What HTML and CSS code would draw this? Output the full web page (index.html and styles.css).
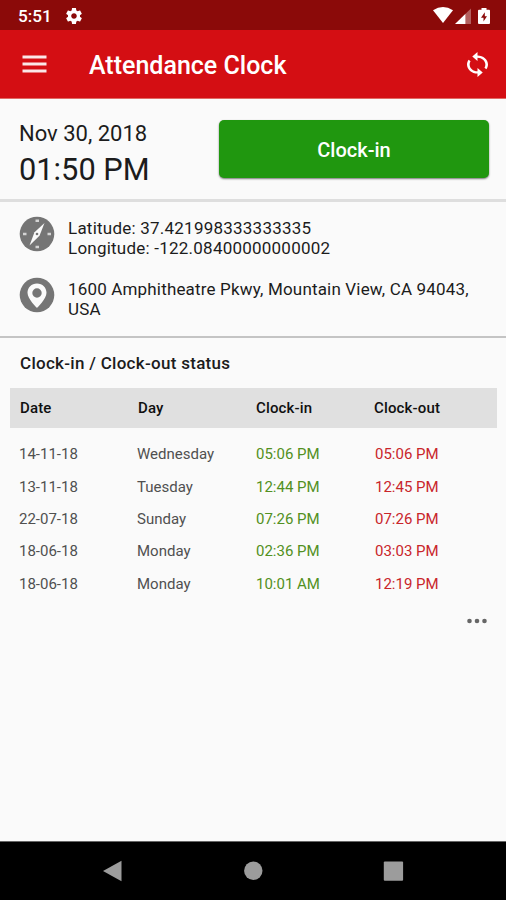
FILE: index.html
```html
<!DOCTYPE html>
<html lang="en">
<head>
<meta charset="utf-8">
<title>Attendance Clock</title>
<link rel="stylesheet" href="styles.css">
</head>
<body>
<div class="status-bar">
  <span class="status-time">5:51</span>
  <svg class="gear" viewBox="2 2 20 20"><path fill="#fff" fill-rule="evenodd" d="M19.43 12.98c.04-.32.07-.64.07-.98s-.03-.66-.07-.98l2.11-1.65c.19-.15.24-.42.12-.64l-2-3.46c-.12-.22-.39-.3-.61-.22l-2.49 1c-.52-.4-1.08-.73-1.69-.98l-.38-2.65C14.46 2.18 14.25 2 14 2h-4c-.25 0-.46.18-.49.42l-.38 2.65c-.61.25-1.17.59-1.69.98l-2.49-1c-.23-.09-.49 0-.61.22l-2 3.46c-.13.22-.07.49.12.64l2.11 1.65c-.04.32-.07.65-.07.98s.03.66.07.98l-2.11 1.65c-.19.15-.24.42-.12.64l2 3.46c.12.22.39.3.61.22l2.49-1c.52.4 1.08.73 1.69.98l.38 2.65c.03.24.24.42.49.42h4c.25 0 .46-.18.49-.42l.38-2.65c.61-.25 1.17-.59 1.69-.98l2.49 1c.23.09.49 0 .61-.22l2-3.46c.12-.22.07-.49-.12-.64l-2.11-1.65zM12 15.5c-1.93 0-3.5-1.57-3.5-3.5s1.57-3.5 3.5-3.5 3.5 1.57 3.5 3.5-1.57 3.5-3.5 3.5z"/></svg>
  <svg class="signals" viewBox="0 0 58 18">
    <path fill="#fff" d="M0 3.2Q10-3.2 20 3.2L10 16z"/>
    <path fill="#fff" d="M22 17 32.5 6.8V17z"/>
    <path fill="#fff" fill-opacity=".35" d="M32.5 6.8 38 1.5V17h-5.500z"/>
    <path fill="#fff" fill-rule="evenodd" d="M46 2.800h2.500V1h5v1.800H56q1 0 1 1V16q0 1-1 1H46q-1 0-1-1V3.800q0-1 1-1zM51.800 5.200 48 10.800h2.500v3.800L54 9.200h-2.200z"/>
  </svg>
</div>
<header class="app-bar">
  <svg class="menu" viewBox="0 0 25 18"><path fill="#fff" fill-opacity=".9" d="M.5 .5H24.500v3H.5zM.5 7.500H24.500v3H.5zM.5 14.500H24.500v3H.5z"/></svg>
  <h1>Attendance Clock</h1>
  <svg class="sync" viewBox="4 1 16 22" preserveAspectRatio="none"><path fill="#fff" d="M12 4V1L8 5l4 4V6c3.310 0 6 2.690 6 6 0 1.010-.25 1.970-.7 2.800l1.460 1.460C19.540 15.030 20 13.570 20 12c0-4.420-3.580-8-8-8zm0 14c-3.310 0-6-2.690-6-6 0-1.010.25-1.970.7-2.800L5.240 7.740C4.460 8.970 4 10.430 4 12c0 4.420 3.580 8 8 8v3l4-4-4-4v3z"/></svg>
</header>
<main>
  <section class="now">
    <div class="moment">
      <div class="date">Nov 30, 2018</div>
      <div class="clock">01:50 PM</div>
    </div>
    <button class="clock-in">Clock-in</button>
  </section>
  <section class="place">
    <div class="place-row">
      <svg class="round" viewBox="0 0 36 36"><circle cx="18" cy="18" r="17.300" fill="#757575"/><path fill="#fafafa" d="M25.500 7 20.500 19.700 10.500 29.500 15.500 16.300z"/><circle cx="18" cy="18" r="1.300" fill="#757575"/><path stroke="#d4d4d4" stroke-width="2.400" d="M16.500 4.800h3.500M16.500 31h3.500M4 18h3.500M28.500 18H32"/></svg>
      <p>Latitude: 37.421998333333335<br>Longitude: -122.08400000000002</p>
    </div>
    <div class="place-row address">
      <svg class="round" viewBox="0 0 36 36"><circle cx="18" cy="18" r="17.300" fill="#757575"/><path fill="#fafafa" fill-rule="evenodd" d="M18 6.500c-5.500 0-9.500 4.200-9.500 9.300C8.500 22 18 31 18 31s9.500-9 9.500-15.200c0-5.100-4-9.300-9.500-9.300zm0 4.800a4.700 4.700 0 1 1 0 9.400 4.700 4.700 0 0 1 0-9.400z"/></svg>
      <p>1600 Amphitheatre Pkwy, Mountain View, CA 94043,<br>USA</p>
    </div>
  </section>
  <section class="history">
    <h2>Clock-in / Clock-out status</h2>
    <div class="row head"><span>Date</span><span>Day</span><span>Clock-in</span><span>Clock-out</span></div>
    <div class="rows">
      <div class="row"><span>14-11-18</span><span>Wednesday</span><span class="in">05:06 PM</span><span class="out">05:06 PM</span></div>
      <div class="row"><span>13-11-18</span><span>Tuesday</span><span class="in">12:44 PM</span><span class="out">12:45 PM</span></div>
      <div class="row"><span>22-07-18</span><span>Sunday</span><span class="in">07:26 PM</span><span class="out">07:26 PM</span></div>
      <div class="row"><span>18-06-18</span><span>Monday</span><span class="in">02:36 PM</span><span class="out">03:03 PM</span></div>
      <div class="row"><span>18-06-18</span><span>Monday</span><span class="in">10:01 AM</span><span class="out">12:19 PM</span></div>
    </div>
    <svg class="more" viewBox="0 0 20 6"><g fill="#666"><circle cx="2.500" cy="3" r="2.300"/><circle cx="10" cy="3" r="2.300"/><circle cx="17.500" cy="3" r="2.300"/></g></svg>
  </section>
</main>
<nav class="nav-bar">
  <svg viewBox="0 0 22 22"><path fill="#9c9c9c" d="M1 11 19.500 .8v20.400z"/></svg>
  <svg viewBox="0 0 22 22"><circle cx="11.300" cy="10.800" r="9.200" fill="#9c9c9c"/></svg>
  <svg viewBox="0 0 22 22"><rect x="1.800" y="1.500" width="19.300" height="19.300" rx="1" fill="#9c9c9c"/></svg>
</nav>
</body>
</html>
```
FILE: styles.css
```css
* { box-sizing: border-box; }
body {
  margin: 0;
  width: 506px;
  height: 900px;
  display: flex;
  flex-direction: column;
  overflow: hidden;
  background: #fafafa;
  color: #1c1c1c;
  font-family: Roboto, "Liberation Sans", sans-serif;
}
h1, h2, p { margin: 0; font-weight: 500; white-space: nowrap; }
svg { display: block; flex: none; }

.status-bar {
  height: 30px;
  flex: none;
  display: flex;
  align-items: center;
  padding: 2px 15px 0 18px;
  background: #8b0a09;
}
.status-time { width: 48px; color: #fff; font-size: 17.2px; font-weight: 500; line-height: 20px; }
.gear { width: 16px; height: 16px; }
.signals { width: 58px; height: 18px; margin-left: auto; }

.app-bar {
  height: 69px;
  flex: none;
  display: flex;
  align-items: center;
  padding: 0 18px 0 22px;
  background: #d40e13;
  border-bottom: 1px solid #e06a64;
}
.menu { width: 25px; height: 18px; }
.app-bar h1 { margin-left: 42px; padding-top: 3px; color: #fff; font-size: 25px; line-height: 30px; }
.sync { width: 21px; height: 25px; margin-left: auto; }

main { flex: 1; }
.now {
  height: 103px;
  display: flex;
  justify-content: space-between;
  padding: 21px 17px 0 19px;
  border-bottom: 3px solid #dedede;
}
.date { font-size: 22px; line-height: 27px; }
.clock { padding-top: 1px; font-size: 30.8px; line-height: 43px; }
.clock-in {
  width: 270px;
  height: 58px;
  padding: 2px 0 0;
  border: 0;
  border-radius: 5px;
  background: #20970f;
  box-shadow: 0 1px 2px #777;
  color: #fff;
  font: 500 20px/24px Roboto, sans-serif;
}

.place {
  height: 136px;
  padding: 14px 19px 0;
  border-bottom: 2px solid #c4c4c4;
}
.place-row { display: flex; gap: 13px; height: 61px; }
.place-row p {
  padding-top: 2px;
  font-weight: 400;
  font-size: 17px;
  line-height: 20px;
  letter-spacing: .23px;
}
.place-row.address p { letter-spacing: .17px; }
.round { width: 36px; height: 36px; }

.history { padding: 15px 9px 0 10px; }
.history h2 { padding-left: 10px; font-size: 17px; line-height: 20px; letter-spacing: .29px; }
.row {
  display: grid;
  grid-template-columns: 118px 119px 119px 1fr;
  align-items: center;
  height: 32.4px;
  padding-left: 9px;
  font-size: 15px;
  color: #505050;
}
.head {
  height: 40px;
  margin-top: 15px;
  padding-left: 10px;
  grid-template-columns: 118px 118px 118px 1fr;
  background: #e0e0e0;
  color: #101010;
  font-weight: 500;
  letter-spacing: .15px;
}
.rows { padding-top: 10px; }
.row .in { color: #529022; }
.row .out { color: #c9252b; }
.more { width: 20px; height: 6px; margin: 18px 10px 0 auto; }

.nav-bar {
  height: 59px;
  flex: none;
  display: flex;
  justify-content: center;
  gap: 118px;
  padding-top: 18px;
  border-top: 1px solid #666;
  background: #000;
}
.nav-bar svg { width: 22px; height: 22px; }
```
